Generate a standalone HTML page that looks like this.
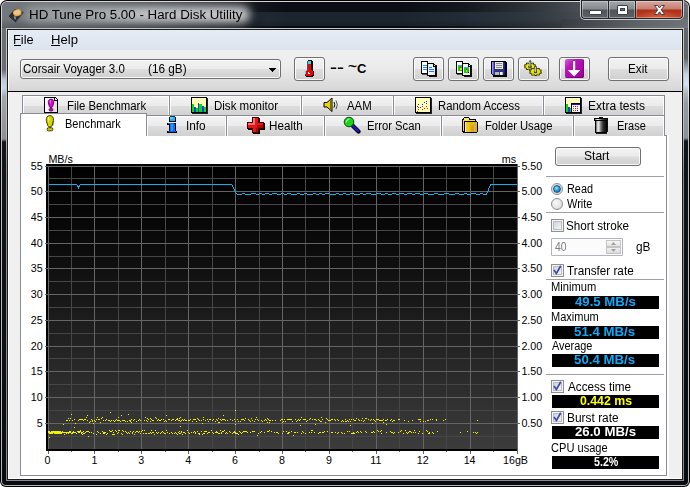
<!DOCTYPE html>
<html><head><meta charset="utf-8"><title>HD Tune Pro 5.00 - Hard Disk Utility</title>
<style>
html,body{margin:0;padding:0}
body{width:690px;height:487px;background:#fff;position:relative;overflow:hidden;font-family:"Liberation Sans",sans-serif;font-size:12px}
div,span,svg{position:absolute;box-sizing:border-box}
.t{white-space:pre;transform-origin:0 50%;color:#000}
.btn{border:1px solid #707070;border-radius:3px;background:linear-gradient(#f2f2f2 0,#ebebeb 48%,#dddddd 52%,#cfcfcf 100%);box-shadow:inset 0 0 0 1px rgba(255,255,255,.85)}
.tab{border:1px solid #898c95;border-bottom:none;background:linear-gradient(#f3f3f3 0,#ebebeb 48%,#dddddd 52%,#d0d0d0 100%);box-shadow:inset 1px 1px 0 0 rgba(255,255,255,.9),inset -1px 0 0 0 rgba(255,255,255,.9)}
.sep{height:1px;background:#a0a0a0;left:546px;width:118px}
.vb{left:552px;width:107px;height:13px;background:#000}
.cb{width:13px;height:13px;border:1px solid #8e8f8f;background:#f4f4f4;box-shadow:inset 0 0 0 1px #f4f4f4,inset 0 0 0 2px #b8bcc4}
.cbi{left:2px;top:2px;width:7px;height:7px;background:linear-gradient(135deg,#d0d4dc,#f6f6f6)}
.ax{font-size:10.7px;line-height:11px;white-space:pre;color:#000}
</style></head><body>
<div id="frame" style="left:0;top:0;width:690px;height:487px;border-radius:7px 7px 6px 6px;background:#000"></div>
<div style="left:1px;top:1px;width:688px;height:485px;border-radius:6px 6px 5px 5px;background:linear-gradient(#d4d4d4 0,#c4c8cc 70px,#e8f0f8 88px,#c8ccd0 110px,#bcbcbc 138px,#b8b8b8 100%)"></div>
<div id="glass" style="left:2px;top:2px;width:686px;height:483px;border-radius:5px 5px 4px 4px;background:linear-gradient(#6c7276 0,#686e73 68px,#bccada 78px,#c8d8e8 86px,#a0a6aa 95px,#8c9094 137px,#12161c 140px,#080c12 100%)"></div>
<div id="tb" style="left:2px;top:2px;width:686px;height:26px;border-radius:5px 5px 0 0;background:
linear-gradient(to right,#72787c 0,#6c7276 50px,#555b61 110px,#3e444a 170px,#262c32 225px,#12161c 258px,#0a0e14 285px,#0a0e14 400px,#12171e 460px,#2c3238 525px,#474d52 575px,#62686c 640px,#6a7074 100%)"></div>
<div style="left:2px;top:12px;width:686px;height:14px;background:linear-gradient(to right,rgba(0,0,0,.0) 0,rgba(0,0,0,.06) 230px,rgba(70,90,110,.30) 265px,rgba(70,90,110,.30) 470px,rgba(40,50,60,.1) 560px,rgba(0,0,0,.05) 100%)"></div>
<div style="left:2px;top:19px;width:560px;height:9px;background:linear-gradient(rgba(0,0,0,0),rgba(0,0,0,.22))"></div>
<div style="left:562px;top:19px;width:126px;height:9px;background:linear-gradient(to right,rgba(0,0,0,.1),rgba(255,255,255,.06))"></div>
<div style="left:24px;top:6px;width:226px;height:17px;border-radius:8px;filter:blur(4px);background:linear-gradient(to right,rgba(255,255,255,.24) 0,rgba(255,255,255,.4) 50px,rgba(255,255,255,.66) 120px,rgba(255,255,255,.74) 200px,rgba(255,255,255,.72) 100%)"></div>
<div style="left:684px;top:28px;width:4px;height:453px;background:linear-gradient(#62686c 0,#5e6468 30px,#c4d4e4 46px,#d4e4f4 56px,#aab2ba 66px,#969a9e 76px,#8c9094 110px,#12161c 113px,#080c12 100%)"></div>
<div style="left:6px;top:28px;width:678px;height:453px;background:linear-gradient(#c6c6c6 0,#c0c0c0 100px,#8c8c8c 145px,#8a8a8a 100%)"></div>
<div style="left:7px;top:29px;width:676px;height:451px;background:#1c1c1c"></div>
<div id="client" style="left:8px;top:30px;width:674px;height:449px;background:#f0f0f0;border-left:1px solid #fff;border-right:1px solid #f8f8f8;border-bottom:1px solid #fff"></div>
<svg style="left:8px;top:8px" width="17" height="15" viewBox="8 8 17 15">
<polygon points="9,15.5 15,9.3 23.5,12 15.8,21.5" fill="#2c2c30"/>
<polygon points="9,15.5 15.8,21.5 15.8,22.4 9,16.6" fill="#161618"/>
<polygon points="15.8,21.5 23.5,12 23.5,13 15.8,22.4" fill="#404046"/>
<ellipse cx="17.3" cy="12.8" rx="4.3" ry="3.3" fill="#eaa84a" transform="rotate(-14 17.3 12.8)"/>
<ellipse cx="17" cy="12.4" rx="3.2" ry="2.3" fill="#f6c676" transform="rotate(-14 17 12.4)"/>
<ellipse cx="17.2" cy="12.7" rx="1.3" ry="1.1" fill="#c4c4cc"/>
<polygon points="13.6,16.4 15.4,16 16.2,19 14.6,19.6" fill="#8c8c94"/>
</svg>
<span class="t" style="left:28.73px;top:9px;font-size:12.5px;line-height:12.5px;transform:scaleX(1.0663);">HD Tune Pro 5.00 - Hard Disk Utility</span>
<div id="cap" style="left:580px;top:0;width:104px;height:20px;border-radius:0 0 5px 5px;background:#c8ccd0"></div>
<div style="left:581px;top:0;width:102px;height:19px;border-radius:0 0 4px 4px;background:#22262a"></div>
<div style="left:582px;top:1px;width:26px;height:17px;border-radius:0 0 0 3px;background:linear-gradient(#a4a8ac 0,#858a8e 8px,#50555a 9px,#5c6166 100%);box-shadow:inset 0 0 0 1px rgba(255,255,255,.35)"></div>
<div style="left:609px;top:1px;width:26px;height:17px;background:linear-gradient(#a4a8ac 0,#858a8e 8px,#50555a 9px,#5c6166 100%);box-shadow:inset 0 0 0 1px rgba(255,255,255,.35)"></div>
<div style="left:636px;top:1px;width:46px;height:17px;border-radius:0 0 3px 0;background:radial-gradient(ellipse 22px 8px at 50% 100%,#d86040 0,rgba(216,96,64,0) 100%),linear-gradient(#d8a89c 0,#c67e6e 8px,#ae2e18 9px,#bc4228 100%);box-shadow:inset 0 0 0 1px rgba(255,255,255,.35)"></div>
<div style="left:589px;top:10px;width:13px;height:5px;background:#fff;border:1px solid #40444e;border-radius:1px"></div>
<div style="left:617px;top:5px;width:11px;height:10px;border:1px solid #3a3e48;border-radius:1px;background:#fff"></div>
<div style="left:620px;top:8px;width:5px;height:3px;background:#70757a;border:1px solid #3a3e48"></div>
<svg style="left:653px;top:4px" width="13" height="12" viewBox="0 0 13 12"><path d="M1.5,1.5 L4.6,1.5 L6.5,3.9 L8.4,1.5 L11.5,1.5 L8.2,5.8 L11.7,10.5 L8.5,10.5 L6.5,7.8 L4.5,10.5 L1.3,10.5 L4.8,5.8 Z" fill="#fff" stroke="#40404c" stroke-width="1" stroke-linejoin="round"/></svg>
<div id="menu" style="left:9px;top:30px;width:672px;height:20px;background:linear-gradient(#e6ecf5,#dde4ee)"></div>
<span class="t" style="left:13.48px;top:34px;font-size:12px;line-height:12px;transform:scaleX(1.0645);">File</span>
<div style="left:14px;top:45px;width:7px;height:1px;background:#000"></div><span class="t" style="left:50.55px;top:34px;font-size:12px;line-height:12px;transform:scaleX(1.0908);">Help</span>
<div style="left:51px;top:45px;width:9px;height:1px;background:#000"></div><div id="toolbar" style="left:9px;top:50px;width:672px;height:41px;background:linear-gradient(#f0f0f0 0,#ececec 40%,#d6d6d6 100%)"></div>
<div style="left:8px;top:91px;width:674px;height:1px;background:#000"></div>
<div class="btn" style="left:20px;top:59px;width:261px;height:20px"></div>
<svg style="left:269px;top:68px" width="7" height="4" viewBox="0 0 7 4" shape-rendering="crispEdges"><polygon points="0,0 7,0 3.5,4" fill="#000"/></svg>
<span class="t" style="left:23.22px;top:63px;font-size:12.5px;line-height:12.5px;transform:scaleX(0.9223);">Corsair Voyager 3.0</span>
<span class="t" style="left:148.29px;top:63px;font-size:12.5px;line-height:12.5px;transform:scaleX(0.9424);">(16 gB)</span>
<div class="btn" style="left:294px;top:57px;width:31px;height:24px"></div>
<div class="btn" style="left:413px;top:57px;width:31px;height:24px"></div>
<div class="btn" style="left:448px;top:57px;width:31px;height:24px"></div>
<div class="btn" style="left:483px;top:57px;width:31px;height:24px"></div>
<div class="btn" style="left:518px;top:57px;width:31px;height:24px"></div>
<div class="btn" style="left:559px;top:57px;width:31px;height:24px"></div>
<div class="btn" style="left:608px;top:57px;width:61px;height:24px"></div>
<span class="t" style="left:627.76px;top:63px;font-size:12.5px;line-height:12.5px;transform:scaleX(0.9414);">Exit</span>
<svg style="left:303px;top:60px" width="12" height="18" viewBox="0 0 12 18" shape-rendering="crispEdges">
<rect x="5" y="0" width="4" height="1" fill="#000"/><rect x="4" y="1" width="1" height="10" fill="#456"/><rect x="5" y="1" width="5" height="12" fill="#000"/>
<rect x="5" y="1" width="3" height="3" fill="#28dce8"/>
<rect x="5" y="4" width="3" height="9" fill="#f00000"/>
<rect x="2" y="11" width="9" height="5" fill="#000"/><rect x="3" y="10" width="7" height="7" fill="#000"/>
<rect x="2" y="11" width="8" height="4" fill="#f00000"/><rect x="3" y="10" width="6" height="6" fill="#f00000"/>
<rect x="2" y="11" width="1" height="3" fill="#40d8e8"/><rect x="3" y="10" width="1" height="1" fill="#40d8e8"/>
<rect x="5" y="12" width="1" height="2" fill="#fff"/><rect x="6" y="13" width="1" height="1" fill="#fff"/>
</svg>
<span class="t" style="left:329.8px;top:61px;font-size:13px;line-height:13px;font-weight:bold;transform:scaleX(1.62)">--</span><span class="t" style="left:348.3px;top:60px;font-size:13px;line-height:13px;font-weight:bold;transform:scaleX(1.2)">~</span><span class="t" style="left:357px;top:62px;font-size:13px;line-height:13px;font-weight:bold">C</span>
<svg style="left:421px;top:61px" width="17" height="17" viewBox="0 0 17 17" shape-rendering="crispEdges"><rect x="0" y="0" width="7" height="13" fill="#000"/><rect x="1" y="1" width="5" height="11" fill="#fff"/><rect x="1" y="13" width="6" height="1" fill="#555"/><rect x="8" y="4" width="8" height="12" fill="#111"/><rect x="6" y="2" width="7" height="13" fill="#000"/><rect x="6" y="5" width="9" height="10" fill="#000"/><rect x="7" y="3" width="5" height="11" fill="#f4f4f4"/><rect x="12" y="6" width="2" height="8" fill="#e8e8e8"/><rect x="12" y="3" width="1" height="3" fill="#000"/><rect x="12" y="5" width="3" height="1" fill="#000"/><rect x="13" y="3" width="1" height="1" fill="#000"/><rect x="14" y="4" width="1" height="1" fill="#000"/><rect x="13" y="4" width="1" height="1" fill="#fff"/><rect x="2" y="4" width="4" height="1" fill="#1e90ff"/><rect x="2" y="6" width="4" height="1" fill="#1e90ff"/><rect x="2" y="8" width="4" height="1" fill="#1e90ff"/><rect x="8" y="6" width="3" height="1" fill="#1e78ff"/><rect x="8" y="8" width="5" height="1" fill="#1e78ff"/><rect x="8" y="10" width="5" height="1" fill="#1e78ff"/></svg>
<svg style="left:456px;top:61px" width="17" height="17" viewBox="0 0 17 17" shape-rendering="crispEdges"><rect x="0" y="0" width="7" height="13" fill="#000"/><rect x="1" y="1" width="5" height="11" fill="#fff"/><rect x="1" y="13" width="6" height="1" fill="#555"/><rect x="8" y="4" width="8" height="12" fill="#111"/><rect x="6" y="2" width="7" height="13" fill="#000"/><rect x="6" y="5" width="9" height="10" fill="#000"/><rect x="7" y="3" width="5" height="11" fill="#f4f4f4"/><rect x="12" y="6" width="2" height="8" fill="#e8e8e8"/><rect x="12" y="3" width="1" height="3" fill="#000"/><rect x="12" y="5" width="3" height="1" fill="#000"/><rect x="13" y="3" width="1" height="1" fill="#000"/><rect x="14" y="4" width="1" height="1" fill="#000"/><rect x="13" y="4" width="1" height="1" fill="#fff"/><rect x="2" y="4" width="4" height="6" fill="#18c818"/><rect x="2" y="4" width="4" height="1" fill="#28b8f0"/><rect x="4" y="6" width="1" height="1" fill="#f01010"/><rect x="4" y="7" width="2" height="2" fill="#e0e000"/><rect x="8" y="6" width="5" height="6" fill="#18c818"/><rect x="8" y="6" width="5" height="1" fill="#28b8f0"/><rect x="10" y="8" width="1" height="1" fill="#f01010"/><rect x="10" y="9" width="1" height="2" fill="#e0e000"/><rect x="12" y="11" width="1" height="1" fill="#000"/></svg>
<svg style="left:491px;top:61px" width="16" height="16" viewBox="0 0 16 16" shape-rendering="crispEdges">
<rect x="15" y="1" width="1" height="15" fill="#000"/><rect x="2" y="15" width="14" height="1" fill="#000"/>
<rect x="0" y="0" width="15" height="13" fill="#000"/><rect x="1" y="13" width="14" height="1" fill="#000"/><rect x="2" y="14" width="13" height="1" fill="#000"/>
<rect x="1" y="1" width="13" height="12" fill="#2424ff"/><rect x="2" y="13" width="12" height="1" fill="#2424ff"/><rect x="1" y="1" width="1" height="12" fill="#9090ff"/><rect x="2" y="1" width="1" height="12" fill="#5858ff"/><rect x="13" y="1" width="1" height="13" fill="#1010c8"/>
<rect x="3" y="1" width="10" height="8" fill="#383838"/><rect x="4" y="1" width="8" height="7" fill="#e8e8e8"/>
<rect x="5" y="2" width="6" height="1" fill="#8c8c8c"/><rect x="5" y="4" width="6" height="1" fill="#8c8c8c"/><rect x="5" y="6" width="6" height="1" fill="#8c8c8c"/>
<rect x="3" y="10" width="10" height="4" fill="#383838"/><rect x="4" y="11" width="8" height="3" fill="#b8b8b8"/><rect x="8" y="11" width="1" height="3" fill="#505050"/><rect x="9" y="11" width="2" height="3" fill="#f4f4f4"/>
</svg>
<svg style="left:520px;top:57px" width="26" height="22" viewBox="520 57 26 22"><rect x="533.5" y="66.2" width="2.2" height="2" fill="#181800"/><rect x="531.8" y="67.9" width="2.2" height="2" fill="#181800"/><rect x="529.0" y="68.5" width="2.2" height="2" fill="#181800"/><rect x="526.1" y="67.9" width="2.2" height="2" fill="#181800"/><rect x="524.4" y="66.3" width="2.2" height="2" fill="#181800"/><rect x="524.3" y="64.4" width="2.2" height="2" fill="#181800"/><rect x="526.0" y="62.7" width="2.2" height="2" fill="#181800"/><rect x="528.8" y="62.1" width="2.2" height="2" fill="#181800"/><rect x="531.7" y="62.7" width="2.2" height="2" fill="#181800"/><rect x="533.4" y="64.3" width="2.2" height="2" fill="#181800"/><ellipse cx="530" cy="66.3" rx="4.5" ry="2.9000000000000004" fill="#e8e800" stroke="#383800" stroke-width=".8"/><rect x="533.4" y="66.6" width="1.2" height="1" fill="#f0f000"/><rect x="531.9" y="68.0" width="1.2" height="1" fill="#f0f000"/><rect x="529.5" y="68.5" width="1.2" height="1" fill="#f0f000"/><rect x="527.0" y="68.0" width="1.2" height="1" fill="#f0f000"/><rect x="525.4" y="66.7" width="1.2" height="1" fill="#f0f000"/><rect x="525.4" y="65.0" width="1.2" height="1" fill="#f0f000"/><rect x="526.9" y="63.6" width="1.2" height="1" fill="#f0f000"/><rect x="529.3" y="63.1" width="1.2" height="1" fill="#f0f000"/><rect x="531.8" y="63.6" width="1.2" height="1" fill="#f0f000"/><rect x="533.4" y="64.9" width="1.2" height="1" fill="#f0f000"/><ellipse cx="530" cy="66.7" rx="1.9" ry="1.2" fill="#404000"/><rect x="528.9" y="61.0" width="2.4" height="6" fill="#484850"/><rect x="529.3" y="61.699999999999996" width="1" height="5" fill="#e0e0e8"/><polygon points="528.9,61.0 530.1,59.9 531.3,61.0" fill="#484850"/><rect x="539.4" y="71.7" width="2.2" height="2" fill="#181800"/><rect x="537.5" y="73.4" width="2.2" height="2" fill="#181800"/><rect x="534.5" y="74.1" width="2.2" height="2" fill="#181800"/><rect x="531.4" y="73.5" width="2.2" height="2" fill="#181800"/><rect x="529.5" y="71.8" width="2.2" height="2" fill="#181800"/><rect x="529.4" y="69.7" width="2.2" height="2" fill="#181800"/><rect x="531.3" y="68.0" width="2.2" height="2" fill="#181800"/><rect x="534.3" y="67.3" width="2.2" height="2" fill="#181800"/><rect x="537.4" y="67.9" width="2.2" height="2" fill="#181800"/><rect x="539.3" y="69.6" width="2.2" height="2" fill="#181800"/><ellipse cx="535.5" cy="71.7" rx="4.9" ry="3.1" fill="#e8e800" stroke="#383800" stroke-width=".8"/><rect x="539.3" y="72.1" width="1.2" height="1" fill="#f0f000"/><rect x="537.7" y="73.5" width="1.2" height="1" fill="#f0f000"/><rect x="535.0" y="74.1" width="1.2" height="1" fill="#f0f000"/><rect x="532.2" y="73.6" width="1.2" height="1" fill="#f0f000"/><rect x="530.5" y="72.1" width="1.2" height="1" fill="#f0f000"/><rect x="530.5" y="70.3" width="1.2" height="1" fill="#f0f000"/><rect x="532.1" y="68.9" width="1.2" height="1" fill="#f0f000"/><rect x="534.8" y="68.3" width="1.2" height="1" fill="#f0f000"/><rect x="537.6" y="68.8" width="1.2" height="1" fill="#f0f000"/><rect x="539.3" y="70.3" width="1.2" height="1" fill="#f0f000"/><ellipse cx="535.5" cy="72.10000000000001" rx="1.9" ry="1.2" fill="#404000"/><rect x="534.4" y="66.4" width="2.4" height="6" fill="#484850"/><rect x="534.8" y="67.10000000000001" width="1" height="5" fill="#e0e0e8"/><polygon points="534.4,66.4 535.6,65.3 536.8,66.4" fill="#484850"/></svg>
<div style="left:565px;top:59px;width:19px;height:19px;border-radius:2px;background:linear-gradient(135deg,#d860d8 0,#b818b8 30%,#a808a8 70%,#900090 100%);box-shadow:inset -1px -1px 0 rgba(90,0,90,.5)"></div>
<svg style="left:565px;top:59px" width="19" height="19" viewBox="565 59 19 19"><path d="M573,61 h2.2 v9 h5.2 l-6.3,6.6 l-6.3,-6.6 h5.2 z" fill="#fff"/></svg>
<div style="left:20px;top:135px;width:649px;height:344px;background:#fff"></div>
<div id="panel" style="left:20px;top:135px;width:647px;height:341px;background:#fff;border:1px solid #898c95"></div>
<div class="tab" style="left:22px;top:95px;width:148px;height:21px"></div>
<div class="tab" style="left:169px;top:95px;width:133px;height:21px"></div>
<div class="tab" style="left:301px;top:95px;width:93px;height:21px"></div>
<div class="tab" style="left:393px;top:95px;width:151px;height:21px"></div>
<div class="tab" style="left:543px;top:95px;width:122px;height:21px"></div>
<div style="left:22px;top:115px;width:643px;height:1px;background:#898c95"></div>
<div class="tab" style="left:146px;top:115px;width:81px;height:21px"></div>
<div class="tab" style="left:226px;top:115px;width:99px;height:21px"></div>
<div class="tab" style="left:324px;top:115px;width:118px;height:21px"></div>
<div class="tab" style="left:441px;top:115px;width:133px;height:21px"></div>
<div class="tab" style="left:573px;top:115px;width:92px;height:21px"></div>
<div style="left:20px;top:113px;width:127px;height:23px;background:#fff;border:1px solid #898c95;border-bottom:none"></div>
<span class="t" style="left:66.59px;top:100px;font-size:12.5px;line-height:12.5px;transform:scaleX(0.9109);">File Benchmark</span>
<span class="t" style="left:213.88px;top:100px;font-size:12.5px;line-height:12.5px;transform:scaleX(0.9210);">Disk monitor</span>
<span class="t" style="left:346.70px;top:100px;font-size:12.5px;line-height:12.5px;transform:scaleX(0.9131);">AAM</span>
<span class="t" style="left:437.79px;top:100px;font-size:12.5px;line-height:12.5px;transform:scaleX(0.9070);">Random Access</span>
<span class="t" style="left:587.74px;top:100px;font-size:12.5px;line-height:12.5px;transform:scaleX(0.9641);">Extra tests</span>
<span class="t" style="left:64.92px;top:118px;font-size:12.5px;line-height:12.5px;transform:scaleX(0.8822);">Benchmark</span>
<span class="t" style="left:185.94px;top:120px;font-size:12.5px;line-height:12.5px;transform:scaleX(0.9443);">Info</span>
<span class="t" style="left:269.27px;top:120px;font-size:12.5px;line-height:12.5px;transform:scaleX(0.9323);">Health</span>
<span class="t" style="left:366.80px;top:120px;font-size:12.5px;line-height:12.5px;transform:scaleX(0.8994);">Error Scan</span>
<span class="t" style="left:484.90px;top:120px;font-size:12.5px;line-height:12.5px;transform:scaleX(0.8996);">Folder Usage</span>
<span class="t" style="left:616.82px;top:120px;font-size:12.5px;line-height:12.5px;transform:scaleX(0.8814);">Erase</span>
<svg style="left:44px;top:97px" width="15" height="16" viewBox="0 0 15 16" shape-rendering="crispEdges">
<rect x="0" y="0" width="14" height="16" fill="#000"/><rect x="1" y="1" width="12" height="14" fill="#e4e4e4"/><rect x="1" y="1" width="6" height="14" fill="#f6f6f6"/>
<rect x="11" y="0" width="3" height="3" fill="#ebebeb"/><rect x="10" y="1" width="1" height="3" fill="#000"/><rect x="10" y="3" width="4" height="1" fill="#000"/><rect x="11" y="1" width="1" height="2" fill="#fff"/><rect x="12" y="2" width="1" height="1" fill="#fff"/><rect x="11" y="0" width="1" height="1" fill="#000"/><rect x="12" y="1" width="1" height="1" fill="#000"/><rect x="13" y="2" width="1" height="1" fill="#000"/>
<g shape-rendering="auto"><path d="M7,2.2 C9,2.2 9.9,3.8 9.6,5.8 L8.6,9.6 C8.4,10.4 7.8,10.6 7,10.6 C6.2,10.6 5.6,10.4 5.4,9.6 L4.4,5.8 C4.1,3.8 5,2.2 7,2.2 Z" fill="#e400e4" stroke="#4a004a" stroke-width=".9"/>
<path d="M5.8,4.2 C5.9,3.4 6.4,3.1 6.8,3.1 L6.5,7.5 Z" fill="#ff90ff"/>
<ellipse cx="7" cy="12.8" rx="2" ry="1.3" fill="#e400e4" stroke="#4a004a" stroke-width=".9"/></g>
</svg>
<svg style="left:45px;top:115px" width="10" height="17" viewBox="0 0 10 17">
<path d="M4.8,0.6 C7.6,0.6 8.7,2.8 8.4,5.4 L7.1,10.6 C6.9,11.5 6.1,11.8 4.9,11.8 C3.7,11.8 2.9,11.5 2.7,10.6 L1.3,5.4 C1,2.8 2.2,0.6 4.8,0.6 Z" fill="#d6d600" stroke="#3c3c00" stroke-width="1"/>
<path d="M2.9,3.4 C3,2.2 3.8,1.7 4.4,1.7 L4,8.4 Z" fill="#f6f680"/>
<path d="M8.7,5.8 L7.5,10.8 L8.1,11.3 L9.3,6.2 Z" fill="#202000" opacity=".55"/>
<rect x="2.2" y="12.7" width="5.6" height="3.1" rx="1.3" fill="#cccc00" stroke="#3c3c00" stroke-width="1"/>
</svg>
<svg style="left:167px;top:116px" width="11" height="18" viewBox="0 0 11 18" shape-rendering="crispEdges">
<rect x="2" y="1" width="7" height="5" fill="#000"/><rect x="3" y="0" width="5" height="1" fill="#103040"/><rect x="3" y="1" width="5" height="4" fill="#18b4f4"/><rect x="3" y="1" width="3" height="2" fill="#50d0ff"/>
<rect x="0" y="7" width="8" height="2" fill="#000"/><rect x="2" y="7" width="7" height="10" fill="#000"/><rect x="0" y="15" width="10" height="2" fill="#000"/>
<rect x="1" y="7" width="6" height="1" fill="#0868f0"/><rect x="3" y="8" width="5" height="7" fill="#0a70ff"/><rect x="4" y="8" width="2" height="7" fill="#2c98ff"/><rect x="1" y="15" width="8" height="1" fill="#0858e8"/>
</svg>
<svg style="left:247px;top:117px" width="18" height="17" viewBox="0 0 18 17" shape-rendering="crispEdges">
<rect x="6" y="1" width="7" height="16" fill="#000"/><rect x="1" y="6" width="17" height="7" fill="#000"/>
<rect x="5" y="0" width="7" height="16" fill="#400"/><rect x="0" y="5" width="17" height="7" fill="#400"/>
<rect x="6" y="1" width="5" height="14" fill="#e01818"/><rect x="1" y="6" width="15" height="5" fill="#e01818"/>
<rect x="6" y="1" width="2" height="5" fill="#ff7070"/><rect x="1" y="6" width="7" height="2" fill="#ff7070"/>
<rect x="10" y="8" width="6" height="3" fill="#b00808"/><rect x="9" y="11" width="2" height="4" fill="#b00808"/>
</svg>
<svg style="left:191px;top:97px" width="17" height="17" viewBox="0 0 17 17" shape-rendering="crispEdges">
<rect x="1" y="1" width="16" height="16" fill="#222"/><rect x="0" y="0" width="16" height="16" fill="#000"/>
<rect x="1" y="1" width="14" height="14" fill="#ffffb8"/>
<rect x="1" y="7" width="2" height="8" fill="#00e000"/><rect x="3" y="10" width="2" height="5" fill="#3030ff"/><rect x="5" y="11" width="2" height="4" fill="#00e000"/>
<rect x="7" y="6" width="1" height="9" fill="#3030ff"/><rect x="8" y="7" width="3" height="8" fill="#00e000"/><rect x="11" y="9" width="2" height="6" fill="#3030ff"/><rect x="13" y="10" width="2" height="5" fill="#00e000"/>
</svg>
<svg style="left:323px;top:97px" width="17" height="16" viewBox="0 0 17 16">
<path d="M1,5.5 L4,5.5 L9,1 L9,14.5 L4,10 L1,10 Z" fill="#e8d800" stroke="#000" stroke-width="1" stroke-linejoin="round"/>
<path d="M7,3.5 L8,2.6 L8,13 L7,12 Z" fill="#806800"/>
<path d="M11,5 Q12.6,7.8 11,10.6" fill="none" stroke="#000" stroke-width="1"/>
<path d="M13,3.4 Q15.6,7.8 13,12.2" fill="none" stroke="#555" stroke-width="1"/>
</svg>
<svg style="left:415px;top:97px" width="17" height="17" viewBox="0 0 17 17" shape-rendering="crispEdges">
<rect x="1" y="1" width="16" height="16" fill="#222"/><rect x="0" y="0" width="16" height="16" fill="#000"/><rect x="1" y="1" width="14" height="14" fill="#ffffb8"/><rect x="11" y="4" width="1" height="1" fill="#1818ff"/><rect x="9" y="5" width="1" height="1" fill="#1818ff"/><rect x="11" y="6" width="1" height="1" fill="#1818ff"/><rect x="3" y="7" width="1" height="1" fill="#1818ff"/><rect x="7" y="7" width="1" height="1" fill="#1818ff"/><rect x="2" y="9" width="1" height="1" fill="#1818ff"/><rect x="5" y="10" width="1" height="1" fill="#1818ff"/><rect x="7" y="9" width="1" height="1" fill="#ff1010"/><rect x="11" y="9" width="1" height="1" fill="#ff1010"/><rect x="3" y="10" width="1" height="1" fill="#ff1010"/><rect x="9" y="11" width="1" height="1" fill="#ff1010"/><rect x="12" y="11" width="1" height="1" fill="#ff1010"/><rect x="3" y="12" width="1" height="1" fill="#ff1010"/><rect x="7" y="12" width="1" height="1" fill="#ff1010"/><rect x="2" y="14" width="1" height="1" fill="#ff1010"/></svg>
<svg style="left:565px;top:97px" width="17" height="17" viewBox="0 0 17 17" shape-rendering="crispEdges">
<rect x="1" y="1" width="16" height="16" fill="#222"/><rect x="0" y="0" width="16" height="16" fill="#000"/><rect x="1" y="1" width="14" height="14" fill="#ffffb8"/>
<rect x="1" y="7" width="2" height="8" fill="#00e000"/><rect x="3" y="10" width="2" height="5" fill="#3030ff"/><rect x="5" y="11" width="1" height="4" fill="#00e000"/>
<rect x="6" y="6" width="10" height="10" fill="#000"/><rect x="7" y="7" width="8" height="8" fill="#f4f4f4"/><rect x="7" y="7" width="8" height="1" fill="#1010f0"/><rect x="8" y="9" width="1" height="1" fill="#ff1010"/><rect x="10" y="9" width="1" height="1" fill="#1818ff"/><rect x="12" y="9" width="1" height="1" fill="#ff1010"/><rect x="8" y="11" width="1" height="1" fill="#10b010"/><rect x="10" y="11" width="1" height="1" fill="#ff1010"/><rect x="12" y="11" width="1" height="1" fill="#ff1010"/><rect x="8" y="13" width="1" height="1" fill="#ff1010"/><rect x="10" y="13" width="1" height="1" fill="#ff1010"/><rect x="12" y="13" width="1" height="1" fill="#1818ff"/>
</svg>
<svg style="left:343px;top:116px" width="18" height="18" viewBox="0 0 18 18">
<path d="M8,8 L15.5,15.5" stroke="#000" stroke-width="4.2" stroke-linecap="round"/>
<path d="M8.5,8.5 L15.2,15.2" stroke="#1818c8" stroke-width="2.4" stroke-linecap="round"/>
<circle cx="6" cy="6" r="4.8" fill="#20d020" stroke="#085008" stroke-width="1"/>
<path d="M3.4,6.4 A3,3 0 0 1 6.6,3.2" stroke="#a0ffa0" stroke-width="1.2" fill="none"/>
</svg>
<svg style="left:462px;top:117px" width="16" height="16" viewBox="0 0 16 16" shape-rendering="crispEdges">
<rect x="2" y="0" width="5" height="1" fill="#000"/><rect x="1" y="1" width="7" height="2" fill="#000"/><rect x="0" y="2" width="14" height="13" fill="#000"/><rect x="1" y="15" width="2" height="1" fill="#000"/>
<rect x="2" y="1" width="5" height="3" fill="#f8ec70"/><rect x="1" y="3" width="12" height="2" fill="#f4e050"/><rect x="1" y="4" width="2" height="10" fill="#f0d838"/><rect x="7" y="2" width="1" height="1" fill="#000"/>
<rect x="2" y="4" width="13" height="12" fill="#000"/><rect x="3" y="15" width="12" height="1" fill="#000"/><rect x="15" y="5" width="1" height="10" fill="#000"/>
<rect x="3" y="5" width="11" height="10" fill="#e8b818"/><rect x="3" y="5" width="1" height="10" fill="#fff080"/><rect x="4" y="5" width="3" height="10" fill="#f0c828"/><rect x="9" y="8" width="3" height="7" fill="#dca410"/><rect x="12" y="5" width="1" height="10" fill="#c0b090"/><rect x="13" y="5" width="2" height="10" fill="#e0b020"/>
</svg>
<svg style="left:594px;top:117px" width="15" height="17" viewBox="0 0 15 17" shape-rendering="crispEdges">
<defs><linearGradient id="tg" x1="0" x2="1" y1="0" y2="0"><stop offset="0" stop-color="#666"/><stop offset=".2" stop-color="#f0f0f0"/><stop offset=".32" stop-color="#d0d0d0"/><stop offset=".5" stop-color="#707070"/><stop offset=".75" stop-color="#282828"/><stop offset="1" stop-color="#101010"/></linearGradient></defs>
<rect x="5" y="0" width="4" height="1" fill="#000"/><rect x="0" y="1" width="14" height="3" fill="#000"/><rect x="1" y="2" width="12" height="1" fill="url(#tg)"/>
<rect x="1" y="4" width="12" height="12" fill="#000"/><rect x="2" y="16" width="11" height="1" fill="#222"/><rect x="13" y="3" width="1" height="12" fill="#111"/>
<rect x="2" y="4" width="10" height="11" fill="url(#tg)"/>
</svg>
<div style="left:46px;top:164px;width:472px;height:287px;background:#000"></div>
<div style="left:48px;top:166px;width:469px;height:283px;background:linear-gradient(#000 0,#0c0c0c 30%,#242424 65%,#3c3c3c 100%)"></div>
<svg style="left:0;top:0" width="690" height="487" viewBox="0 0 690 487"><g shape-rendering="crispEdges"><rect x="48" y="178" width="469" height="1" fill="#464646"/><rect x="48" y="204" width="469" height="1" fill="#464646"/><rect x="48" y="230" width="469" height="1" fill="#464646"/><rect x="48" y="256" width="469" height="1" fill="#464646"/><rect x="48" y="281" width="469" height="1" fill="#464646"/><rect x="48" y="307" width="469" height="1" fill="#464646"/><rect x="48" y="333" width="469" height="1" fill="#464646"/><rect x="48" y="358" width="469" height="1" fill="#464646"/><rect x="48" y="384" width="469" height="1" fill="#464646"/><rect x="48" y="410" width="469" height="1" fill="#464646"/><rect x="48" y="436" width="469" height="1" fill="#464646"/><rect x="71" y="166" width="1" height="283" fill="#464646"/><rect x="71" y="451" width="1" height="1" fill="#666"/><rect x="118" y="166" width="1" height="283" fill="#464646"/><rect x="118" y="451" width="1" height="1" fill="#666"/><rect x="165" y="166" width="1" height="283" fill="#464646"/><rect x="165" y="451" width="1" height="1" fill="#666"/><rect x="212" y="166" width="1" height="283" fill="#464646"/><rect x="212" y="451" width="1" height="1" fill="#666"/><rect x="259" y="166" width="1" height="283" fill="#464646"/><rect x="259" y="451" width="1" height="1" fill="#666"/><rect x="305" y="166" width="1" height="283" fill="#464646"/><rect x="305" y="451" width="1" height="1" fill="#666"/><rect x="352" y="166" width="1" height="283" fill="#464646"/><rect x="352" y="451" width="1" height="1" fill="#666"/><rect x="399" y="166" width="1" height="283" fill="#464646"/><rect x="399" y="451" width="1" height="1" fill="#666"/><rect x="446" y="166" width="1" height="283" fill="#464646"/><rect x="446" y="451" width="1" height="1" fill="#666"/><rect x="493" y="166" width="1" height="283" fill="#464646"/><rect x="493" y="451" width="1" height="1" fill="#666"/><rect x="45" y="166" width="475" height="1" fill="#656565"/><rect x="45" y="191" width="475" height="1" fill="#656565"/><rect x="45" y="217" width="475" height="1" fill="#656565"/><rect x="45" y="243" width="475" height="1" fill="#656565"/><rect x="45" y="268" width="475" height="1" fill="#656565"/><rect x="45" y="294" width="475" height="1" fill="#656565"/><rect x="45" y="320" width="475" height="1" fill="#656565"/><rect x="45" y="346" width="475" height="1" fill="#656565"/><rect x="45" y="371" width="475" height="1" fill="#656565"/><rect x="45" y="397" width="475" height="1" fill="#656565"/><rect x="45" y="423" width="475" height="1" fill="#656565"/><rect x="48" y="166" width="1" height="283" fill="#656565"/><rect x="48" y="451" width="1" height="3" fill="#666"/><rect x="94" y="166" width="1" height="283" fill="#656565"/><rect x="94" y="451" width="1" height="3" fill="#666"/><rect x="141" y="166" width="1" height="283" fill="#656565"/><rect x="141" y="451" width="1" height="3" fill="#666"/><rect x="188" y="166" width="1" height="283" fill="#656565"/><rect x="188" y="451" width="1" height="3" fill="#666"/><rect x="235" y="166" width="1" height="283" fill="#656565"/><rect x="235" y="451" width="1" height="3" fill="#666"/><rect x="282" y="166" width="1" height="283" fill="#656565"/><rect x="282" y="451" width="1" height="3" fill="#666"/><rect x="329" y="166" width="1" height="283" fill="#656565"/><rect x="329" y="451" width="1" height="3" fill="#666"/><rect x="376" y="166" width="1" height="283" fill="#656565"/><rect x="376" y="451" width="1" height="3" fill="#666"/><rect x="423" y="166" width="1" height="283" fill="#656565"/><rect x="423" y="451" width="1" height="3" fill="#666"/><rect x="470" y="166" width="1" height="283" fill="#656565"/><rect x="470" y="451" width="1" height="3" fill="#666"/><rect x="517" y="166" width="1" height="283" fill="#656565"/><rect x="517" y="451" width="1" height="3" fill="#666"/><rect x="517" y="164" width="1" height="290" fill="#666"/></g><polyline shape-rendering="crispEdges" fill="none" stroke="#12b0ee" stroke-width="1" points="48.5,184.5 76.5,184.5 77.5,185.5 78.5,187.5 79.5,185.5 80.5,184.5 231.5,184.5 233.5,187.5 235.5,192.5 237.5,194.5 241.5,194.5 242.5,193.5 244.5,193.5 245.5,194.5 250.5,194.5 251.5,193.5 255.5,193.5 256.5,194.5 258.5,194.5 259.5,193.5 261.5,193.5 262.5,194.5 264.5,194.5 265.5,193.5 268.5,193.5 269.5,194.5 271.5,194.5 272.5,193.5 276.5,193.5 277.5,194.5 280.5,194.5 281.5,193.5 283.5,193.5 284.5,194.5 286.5,194.5 287.5,193.5 290.5,193.5 291.5,194.5 296.5,194.5 297.5,193.5 299.5,193.5 300.5,194.5 303.5,194.5 304.5,193.5 306.5,193.5 307.5,194.5 312.5,194.5 313.5,193.5 315.5,193.5 316.5,194.5 318.5,194.5 319.5,193.5 321.5,193.5 322.5,194.5 324.5,194.5 325.5,193.5 329.5,193.5 330.5,194.5 335.5,194.5 336.5,193.5 338.5,193.5 339.5,194.5 342.5,194.5 343.5,193.5 345.5,193.5 346.5,194.5 349.5,194.5 350.5,193.5 353.5,193.5 354.5,194.5 359.5,194.5 360.5,193.5 362.5,193.5 363.5,194.5 365.5,194.5 366.5,193.5 370.5,193.5 371.5,194.5 375.5,194.5 376.5,193.5 380.5,193.5 381.5,194.5 384.5,194.5 385.5,193.5 387.5,193.5 388.5,194.5 391.5,194.5 392.5,193.5 395.5,193.5 396.5,194.5 398.5,194.5 399.5,193.5 403.5,193.5 404.5,194.5 406.5,194.5 407.5,193.5 411.5,193.5 412.5,194.5 414.5,194.5 415.5,193.5 419.5,193.5 420.5,194.5 423.5,194.5 424.5,193.5 427.5,193.5 428.5,194.5 433.5,194.5 434.5,193.5 437.5,193.5 438.5,194.5 443.5,194.5 444.5,193.5 448.5,193.5 449.5,194.5 454.5,194.5 455.5,193.5 458.5,193.5 459.5,194.5 463.5,194.5 464.5,193.5 466.5,193.5 467.5,194.5 470.5,194.5 471.5,193.5 475.5,193.5 476.5,194.5 479.5,194.5 480.5,193.5 482.5,193.5 483.5,194.5 486.5,194.5 488.5,189.5 490.5,184.5 516.5,184.5"/><g fill="#f2f200" shape-rendering="crispEdges"><rect x="48" y="431" width="1" height="1"/><rect x="48" y="432" width="1" height="1"/><rect x="49" y="433" width="1" height="1"/><rect x="49" y="432" width="1" height="1"/><rect x="49" y="431" width="1" height="1"/><rect x="50" y="432" width="1" height="1"/><rect x="50" y="433" width="1" height="1"/><rect x="51" y="431" width="1" height="1"/><rect x="51" y="433" width="1" height="1"/><rect x="51" y="432" width="1" height="1"/><rect x="52" y="431" width="1" height="1"/><rect x="52" y="433" width="1" height="1"/><rect x="52" y="432" width="1" height="1"/><rect x="53" y="432" width="1" height="1"/><rect x="53" y="431" width="1" height="1"/><rect x="54" y="431" width="1" height="1"/><rect x="54" y="432" width="1" height="1"/><rect x="54" y="433" width="1" height="1"/><rect x="55" y="432" width="1" height="1"/><rect x="55" y="433" width="1" height="1"/><rect x="55" y="431" width="1" height="1"/><rect x="56" y="433" width="1" height="1"/><rect x="56" y="432" width="1" height="1"/><rect x="56" y="431" width="1" height="1"/><rect x="57" y="432" width="1" height="1"/><rect x="57" y="431" width="1" height="1"/><rect x="57" y="433" width="1" height="1"/><rect x="58" y="431" width="1" height="1"/><rect x="58" y="432" width="1" height="1"/><rect x="58" y="433" width="1" height="1"/><rect x="59" y="433" width="1" height="1"/><rect x="59" y="432" width="1" height="1"/><rect x="59" y="431" width="1" height="1"/><rect x="60" y="433" width="1" height="1"/><rect x="60" y="431" width="1" height="1"/><rect x="60" y="432" width="1" height="1"/><rect x="61" y="433" width="1" height="1"/><rect x="61" y="432" width="1" height="1"/><rect x="62" y="431" width="1" height="1"/><rect x="62" y="432" width="1" height="1"/><rect x="63" y="432" width="1" height="1"/><rect x="64" y="434" width="1" height="1"/><rect x="64" y="432" width="1" height="1"/><rect x="65" y="432" width="1" height="1"/><rect x="66" y="432" width="1" height="1"/><rect x="66" y="433" width="1" height="1"/><rect x="66" y="420" width="1" height="1"/><rect x="67" y="432" width="1" height="1"/><rect x="67" y="420" width="1" height="1"/><rect x="68" y="433" width="1" height="1"/><rect x="68" y="432" width="1" height="1"/><rect x="68" y="418" width="1" height="1"/><rect x="69" y="432" width="1" height="1"/><rect x="69" y="431" width="1" height="1"/><rect x="69" y="420" width="1" height="1"/><rect x="70" y="431" width="1" height="1"/><rect x="70" y="432" width="1" height="1"/><rect x="70" y="418" width="1" height="1"/><rect x="71" y="433" width="1" height="1"/><rect x="71" y="414" width="1" height="1"/><rect x="72" y="432" width="1" height="1"/><rect x="72" y="433" width="1" height="1"/><rect x="72" y="420" width="1" height="1"/><rect x="73" y="431" width="1" height="1"/><rect x="73" y="432" width="1" height="1"/><rect x="74" y="432" width="1" height="1"/><rect x="74" y="419" width="1" height="1"/><rect x="75" y="432" width="1" height="1"/><rect x="75" y="423" width="1" height="1"/><rect x="76" y="433" width="1" height="1"/><rect x="77" y="431" width="1" height="1"/><rect x="78" y="432" width="1" height="1"/><rect x="78" y="431" width="1" height="1"/><rect x="78" y="420" width="1" height="1"/><rect x="79" y="432" width="1" height="1"/><rect x="79" y="431" width="1" height="1"/><rect x="79" y="419" width="1" height="1"/><rect x="80" y="430" width="1" height="1"/><rect x="80" y="431" width="1" height="1"/><rect x="80" y="419" width="1" height="1"/><rect x="81" y="432" width="1" height="1"/><rect x="81" y="433" width="1" height="1"/><rect x="81" y="419" width="1" height="1"/><rect x="82" y="434" width="1" height="1"/><rect x="82" y="432" width="1" height="1"/><rect x="82" y="419" width="1" height="1"/><rect x="83" y="433" width="1" height="1"/><rect x="83" y="431" width="1" height="1"/><rect x="83" y="420" width="1" height="1"/><rect x="84" y="433" width="1" height="1"/><rect x="84" y="419" width="1" height="1"/><rect x="85" y="432" width="1" height="1"/><rect x="85" y="419" width="1" height="1"/><rect x="86" y="431" width="1" height="1"/><rect x="86" y="417" width="1" height="1"/><rect x="87" y="431" width="1" height="1"/><rect x="87" y="420" width="1" height="1"/><rect x="88" y="431" width="1" height="1"/><rect x="88" y="436" width="1" height="1"/><rect x="89" y="432" width="1" height="1"/><rect x="89" y="422" width="1" height="1"/><rect x="90" y="421" width="1" height="1"/><rect x="91" y="432" width="1" height="1"/><rect x="91" y="419" width="1" height="1"/><rect x="92" y="421" width="1" height="1"/><rect x="92" y="420" width="1" height="1"/><rect x="93" y="433" width="1" height="1"/><rect x="93" y="423" width="1" height="1"/><rect x="94" y="420" width="1" height="1"/><rect x="95" y="421" width="1" height="1"/><rect x="96" y="434" width="1" height="1"/><rect x="96" y="419" width="1" height="1"/><rect x="97" y="431" width="1" height="1"/><rect x="97" y="417" width="1" height="1"/><rect x="98" y="432" width="1" height="1"/><rect x="98" y="419" width="1" height="1"/><rect x="99" y="419" width="1" height="1"/><rect x="100" y="433" width="1" height="1"/><rect x="100" y="422" width="1" height="1"/><rect x="101" y="418" width="1" height="1"/><rect x="102" y="431" width="1" height="1"/><rect x="102" y="417" width="1" height="1"/><rect x="103" y="432" width="1" height="1"/><rect x="103" y="433" width="1" height="1"/><rect x="103" y="420" width="1" height="1"/><rect x="104" y="433" width="1" height="1"/><rect x="104" y="432" width="1" height="1"/><rect x="105" y="432" width="1" height="1"/><rect x="105" y="420" width="1" height="1"/><rect x="106" y="434" width="1" height="1"/><rect x="106" y="419" width="1" height="1"/><rect x="107" y="433" width="1" height="1"/><rect x="108" y="420" width="1" height="1"/><rect x="109" y="430" width="1" height="1"/><rect x="109" y="420" width="1" height="1"/><rect x="110" y="431" width="1" height="1"/><rect x="110" y="421" width="1" height="1"/><rect x="111" y="431" width="1" height="1"/><rect x="111" y="420" width="1" height="1"/><rect x="112" y="430" width="1" height="1"/><rect x="112" y="434" width="1" height="1"/><rect x="113" y="432" width="1" height="1"/><rect x="113" y="434" width="1" height="1"/><rect x="113" y="420" width="1" height="1"/><rect x="114" y="434" width="1" height="1"/><rect x="114" y="421" width="1" height="1"/><rect x="115" y="430" width="1" height="1"/><rect x="115" y="420" width="1" height="1"/><rect x="116" y="431" width="1" height="1"/><rect x="116" y="419" width="1" height="1"/><rect x="117" y="433" width="1" height="1"/><rect x="117" y="420" width="1" height="1"/><rect x="118" y="432" width="1" height="1"/><rect x="118" y="430" width="1" height="1"/><rect x="118" y="417" width="1" height="1"/><rect x="118" y="420" width="1" height="1"/><rect x="119" y="430" width="1" height="1"/><rect x="119" y="420" width="1" height="1"/><rect x="120" y="421" width="1" height="1"/><rect x="121" y="433" width="1" height="1"/><rect x="122" y="434" width="1" height="1"/><rect x="122" y="430" width="1" height="1"/><rect x="122" y="420" width="1" height="1"/><rect x="123" y="431" width="1" height="1"/><rect x="123" y="420" width="1" height="1"/><rect x="124" y="420" width="1" height="1"/><rect x="125" y="431" width="1" height="1"/><rect x="125" y="421" width="1" height="1"/><rect x="126" y="432" width="1" height="1"/><rect x="127" y="433" width="1" height="1"/><rect x="127" y="421" width="1" height="1"/><rect x="128" y="432" width="1" height="1"/><rect x="129" y="433" width="1" height="1"/><rect x="129" y="420" width="1" height="1"/><rect x="130" y="431" width="1" height="1"/><rect x="130" y="421" width="1" height="1"/><rect x="130" y="420" width="1" height="1"/><rect x="131" y="419" width="1" height="1"/><rect x="131" y="422" width="1" height="1"/><rect x="132" y="432" width="1" height="1"/><rect x="132" y="433" width="1" height="1"/><rect x="133" y="431" width="1" height="1"/><rect x="133" y="420" width="1" height="1"/><rect x="134" y="434" width="1" height="1"/><rect x="134" y="419" width="1" height="1"/><rect x="135" y="432" width="1" height="1"/><rect x="136" y="431" width="1" height="1"/><rect x="136" y="421" width="1" height="1"/><rect x="137" y="431" width="1" height="1"/><rect x="138" y="432" width="1" height="1"/><rect x="138" y="420" width="1" height="1"/><rect x="139" y="431" width="1" height="1"/><rect x="139" y="419" width="1" height="1"/><rect x="140" y="433" width="1" height="1"/><rect x="140" y="420" width="1" height="1"/><rect x="141" y="431" width="1" height="1"/><rect x="142" y="430" width="1" height="1"/><rect x="143" y="433" width="1" height="1"/><rect x="144" y="430" width="1" height="1"/><rect x="144" y="420" width="1" height="1"/><rect x="145" y="433" width="1" height="1"/><rect x="145" y="417" width="1" height="1"/><rect x="146" y="433" width="1" height="1"/><rect x="146" y="420" width="1" height="1"/><rect x="147" y="418" width="1" height="1"/><rect x="147" y="421" width="1" height="1"/><rect x="148" y="433" width="1" height="1"/><rect x="148" y="419" width="1" height="1"/><rect x="149" y="433" width="1" height="1"/><rect x="150" y="432" width="1" height="1"/><rect x="150" y="418" width="1" height="1"/><rect x="150" y="421" width="1" height="1"/><rect x="151" y="433" width="1" height="1"/><rect x="151" y="430" width="1" height="1"/><rect x="151" y="419" width="1" height="1"/><rect x="152" y="432" width="1" height="1"/><rect x="152" y="420" width="1" height="1"/><rect x="153" y="432" width="1" height="1"/><rect x="153" y="420" width="1" height="1"/><rect x="154" y="434" width="1" height="1"/><rect x="155" y="430" width="1" height="1"/><rect x="155" y="417" width="1" height="1"/><rect x="156" y="432" width="1" height="1"/><rect x="156" y="418" width="1" height="1"/><rect x="157" y="433" width="1" height="1"/><rect x="157" y="420" width="1" height="1"/><rect x="158" y="432" width="1" height="1"/><rect x="158" y="419" width="1" height="1"/><rect x="159" y="420" width="1" height="1"/><rect x="160" y="433" width="1" height="1"/><rect x="160" y="420" width="1" height="1"/><rect x="161" y="432" width="1" height="1"/><rect x="161" y="419" width="1" height="1"/><rect x="162" y="431" width="1" height="1"/><rect x="163" y="432" width="1" height="1"/><rect x="163" y="419" width="1" height="1"/><rect x="164" y="433" width="1" height="1"/><rect x="164" y="421" width="1" height="1"/><rect x="165" y="433" width="1" height="1"/><rect x="165" y="420" width="1" height="1"/><rect x="166" y="430" width="1" height="1"/><rect x="166" y="421" width="1" height="1"/><rect x="166" y="415" width="1" height="1"/><rect x="167" y="432" width="1" height="1"/><rect x="168" y="419" width="1" height="1"/><rect x="169" y="433" width="1" height="1"/><rect x="169" y="419" width="1" height="1"/><rect x="171" y="432" width="1" height="1"/><rect x="171" y="420" width="1" height="1"/><rect x="172" y="433" width="1" height="1"/><rect x="172" y="419" width="1" height="1"/><rect x="173" y="419" width="1" height="1"/><rect x="174" y="433" width="1" height="1"/><rect x="175" y="432" width="1" height="1"/><rect x="175" y="420" width="1" height="1"/><rect x="176" y="433" width="1" height="1"/><rect x="176" y="419" width="1" height="1"/><rect x="177" y="434" width="1" height="1"/><rect x="177" y="418" width="1" height="1"/><rect x="177" y="419" width="1" height="1"/><rect x="178" y="432" width="1" height="1"/><rect x="178" y="420" width="1" height="1"/><rect x="179" y="433" width="1" height="1"/><rect x="179" y="431" width="1" height="1"/><rect x="179" y="420" width="1" height="1"/><rect x="179" y="418" width="1" height="1"/><rect x="180" y="433" width="1" height="1"/><rect x="180" y="421" width="1" height="1"/><rect x="180" y="417" width="1" height="1"/><rect x="181" y="431" width="1" height="1"/><rect x="181" y="432" width="1" height="1"/><rect x="181" y="420" width="1" height="1"/><rect x="182" y="434" width="1" height="1"/><rect x="182" y="419" width="1" height="1"/><rect x="183" y="432" width="1" height="1"/><rect x="183" y="420" width="1" height="1"/><rect x="184" y="432" width="1" height="1"/><rect x="184" y="419" width="1" height="1"/><rect x="185" y="433" width="1" height="1"/><rect x="185" y="420" width="1" height="1"/><rect x="186" y="420" width="1" height="1"/><rect x="187" y="430" width="1" height="1"/><rect x="188" y="432" width="1" height="1"/><rect x="188" y="420" width="1" height="1"/><rect x="189" y="433" width="1" height="1"/><rect x="189" y="420" width="1" height="1"/><rect x="190" y="419" width="1" height="1"/><rect x="191" y="432" width="1" height="1"/><rect x="192" y="421" width="1" height="1"/><rect x="193" y="432" width="1" height="1"/><rect x="193" y="419" width="1" height="1"/><rect x="194" y="431" width="1" height="1"/><rect x="194" y="419" width="1" height="1"/><rect x="195" y="432" width="1" height="1"/><rect x="195" y="433" width="1" height="1"/><rect x="195" y="419" width="1" height="1"/><rect x="196" y="421" width="1" height="1"/><rect x="197" y="431" width="1" height="1"/><rect x="197" y="418" width="1" height="1"/><rect x="198" y="433" width="1" height="1"/><rect x="198" y="419" width="1" height="1"/><rect x="199" y="433" width="1" height="1"/><rect x="199" y="434" width="1" height="1"/><rect x="199" y="420" width="1" height="1"/><rect x="201" y="431" width="1" height="1"/><rect x="201" y="420" width="1" height="1"/><rect x="202" y="434" width="1" height="1"/><rect x="202" y="423" width="1" height="1"/><rect x="203" y="433" width="1" height="1"/><rect x="203" y="419" width="1" height="1"/><rect x="203" y="417" width="1" height="1"/><rect x="204" y="431" width="1" height="1"/><rect x="204" y="433" width="1" height="1"/><rect x="205" y="431" width="1" height="1"/><rect x="205" y="420" width="1" height="1"/><rect x="206" y="431" width="1" height="1"/><rect x="207" y="433" width="1" height="1"/><rect x="207" y="419" width="1" height="1"/><rect x="208" y="432" width="1" height="1"/><rect x="208" y="421" width="1" height="1"/><rect x="209" y="432" width="1" height="1"/><rect x="209" y="419" width="1" height="1"/><rect x="210" y="419" width="1" height="1"/><rect x="211" y="430" width="1" height="1"/><rect x="212" y="432" width="1" height="1"/><rect x="212" y="420" width="1" height="1"/><rect x="213" y="433" width="1" height="1"/><rect x="213" y="419" width="1" height="1"/><rect x="215" y="432" width="1" height="1"/><rect x="215" y="421" width="1" height="1"/><rect x="216" y="431" width="1" height="1"/><rect x="216" y="432" width="1" height="1"/><rect x="216" y="419" width="1" height="1"/><rect x="217" y="432" width="1" height="1"/><rect x="217" y="420" width="1" height="1"/><rect x="218" y="433" width="1" height="1"/><rect x="218" y="418" width="1" height="1"/><rect x="218" y="422" width="1" height="1"/><rect x="219" y="433" width="1" height="1"/><rect x="219" y="422" width="1" height="1"/><rect x="220" y="430" width="1" height="1"/><rect x="220" y="419" width="1" height="1"/><rect x="221" y="432" width="1" height="1"/><rect x="221" y="433" width="1" height="1"/><rect x="221" y="420" width="1" height="1"/><rect x="222" y="431" width="1" height="1"/><rect x="222" y="419" width="1" height="1"/><rect x="223" y="431" width="1" height="1"/><rect x="223" y="419" width="1" height="1"/><rect x="223" y="415" width="1" height="1"/><rect x="224" y="430" width="1" height="1"/><rect x="224" y="419" width="1" height="1"/><rect x="225" y="433" width="1" height="1"/><rect x="225" y="420" width="1" height="1"/><rect x="226" y="432" width="1" height="1"/><rect x="227" y="433" width="1" height="1"/><rect x="227" y="420" width="1" height="1"/><rect x="229" y="431" width="1" height="1"/><rect x="230" y="432" width="1" height="1"/><rect x="230" y="419" width="1" height="1"/><rect x="232" y="433" width="1" height="1"/><rect x="232" y="420" width="1" height="1"/><rect x="233" y="432" width="1" height="1"/><rect x="234" y="431" width="1" height="1"/><rect x="234" y="432" width="1" height="1"/><rect x="234" y="419" width="1" height="1"/><rect x="235" y="432" width="1" height="1"/><rect x="235" y="433" width="1" height="1"/><rect x="235" y="421" width="1" height="1"/><rect x="235" y="424" width="1" height="1"/><rect x="236" y="433" width="1" height="1"/><rect x="237" y="433" width="1" height="1"/><rect x="237" y="419" width="1" height="1"/><rect x="238" y="434" width="1" height="1"/><rect x="238" y="421" width="1" height="1"/><rect x="239" y="431" width="1" height="1"/><rect x="240" y="432" width="1" height="1"/><rect x="240" y="421" width="1" height="1"/><rect x="241" y="433" width="1" height="1"/><rect x="241" y="419" width="1" height="1"/><rect x="242" y="432" width="1" height="1"/><rect x="242" y="419" width="1" height="1"/><rect x="243" y="431" width="1" height="1"/><rect x="243" y="419" width="1" height="1"/><rect x="244" y="431" width="1" height="1"/><rect x="244" y="420" width="1" height="1"/><rect x="245" y="431" width="1" height="1"/><rect x="245" y="418" width="1" height="1"/><rect x="246" y="431" width="1" height="1"/><rect x="247" y="432" width="1" height="1"/><rect x="248" y="419" width="1" height="1"/><rect x="249" y="420" width="1" height="1"/><rect x="250" y="432" width="1" height="1"/><rect x="250" y="421" width="1" height="1"/><rect x="251" y="418" width="1" height="1"/><rect x="252" y="431" width="1" height="1"/><rect x="252" y="420" width="1" height="1"/><rect x="253" y="431" width="1" height="1"/><rect x="254" y="431" width="1" height="1"/><rect x="254" y="421" width="1" height="1"/><rect x="255" y="419" width="1" height="1"/><rect x="256" y="417" width="1" height="1"/><rect x="257" y="435" width="1" height="1"/><rect x="257" y="419" width="1" height="1"/><rect x="258" y="433" width="1" height="1"/><rect x="258" y="420" width="1" height="1"/><rect x="260" y="432" width="1" height="1"/><rect x="261" y="431" width="1" height="1"/><rect x="261" y="420" width="1" height="1"/><rect x="262" y="421" width="1" height="1"/><rect x="264" y="432" width="1" height="1"/><rect x="264" y="420" width="1" height="1"/><rect x="265" y="419" width="1" height="1"/><rect x="266" y="420" width="1" height="1"/><rect x="267" y="431" width="1" height="1"/><rect x="267" y="418" width="1" height="1"/><rect x="267" y="422" width="1" height="1"/><rect x="268" y="431" width="1" height="1"/><rect x="268" y="419" width="1" height="1"/><rect x="269" y="430" width="1" height="1"/><rect x="269" y="420" width="1" height="1"/><rect x="269" y="422" width="1" height="1"/><rect x="270" y="420" width="1" height="1"/><rect x="271" y="431" width="1" height="1"/><rect x="272" y="420" width="1" height="1"/><rect x="274" y="432" width="1" height="1"/><rect x="275" y="420" width="1" height="1"/><rect x="276" y="432" width="1" height="1"/><rect x="277" y="432" width="1" height="1"/><rect x="278" y="433" width="1" height="1"/><rect x="280" y="420" width="1" height="1"/><rect x="281" y="419" width="1" height="1"/><rect x="282" y="433" width="1" height="1"/><rect x="282" y="419" width="1" height="1"/><rect x="282" y="422" width="1" height="1"/><rect x="283" y="431" width="1" height="1"/><rect x="283" y="421" width="1" height="1"/><rect x="284" y="419" width="1" height="1"/><rect x="285" y="421" width="1" height="1"/><rect x="286" y="431" width="1" height="1"/><rect x="287" y="433" width="1" height="1"/><rect x="287" y="419" width="1" height="1"/><rect x="288" y="432" width="1" height="1"/><rect x="288" y="433" width="1" height="1"/><rect x="288" y="419" width="1" height="1"/><rect x="289" y="432" width="1" height="1"/><rect x="289" y="419" width="1" height="1"/><rect x="290" y="419" width="1" height="1"/><rect x="291" y="431" width="1" height="1"/><rect x="291" y="419" width="1" height="1"/><rect x="292" y="421" width="1" height="1"/><rect x="293" y="435" width="1" height="1"/><rect x="294" y="432" width="1" height="1"/><rect x="295" y="432" width="1" height="1"/><rect x="295" y="419" width="1" height="1"/><rect x="296" y="421" width="1" height="1"/><rect x="297" y="432" width="1" height="1"/><rect x="297" y="420" width="1" height="1"/><rect x="298" y="419" width="1" height="1"/><rect x="299" y="420" width="1" height="1"/><rect x="300" y="419" width="1" height="1"/><rect x="301" y="433" width="1" height="1"/><rect x="301" y="417" width="1" height="1"/><rect x="302" y="431" width="1" height="1"/><rect x="303" y="432" width="1" height="1"/><rect x="303" y="419" width="1" height="1"/><rect x="304" y="419" width="1" height="1"/><rect x="305" y="433" width="1" height="1"/><rect x="305" y="419" width="1" height="1"/><rect x="306" y="421" width="1" height="1"/><rect x="307" y="420" width="1" height="1"/><rect x="309" y="432" width="1" height="1"/><rect x="309" y="419" width="1" height="1"/><rect x="310" y="418" width="1" height="1"/><rect x="311" y="432" width="1" height="1"/><rect x="311" y="430" width="1" height="1"/><rect x="312" y="430" width="1" height="1"/><rect x="312" y="419" width="1" height="1"/><rect x="314" y="432" width="1" height="1"/><rect x="314" y="419" width="1" height="1"/><rect x="315" y="419" width="1" height="1"/><rect x="315" y="424" width="1" height="1"/><rect x="316" y="420" width="1" height="1"/><rect x="318" y="433" width="1" height="1"/><rect x="318" y="419" width="1" height="1"/><rect x="319" y="432" width="1" height="1"/><rect x="319" y="420" width="1" height="1"/><rect x="320" y="432" width="1" height="1"/><rect x="320" y="421" width="1" height="1"/><rect x="321" y="421" width="1" height="1"/><rect x="321" y="417" width="1" height="1"/><rect x="322" y="432" width="1" height="1"/><rect x="322" y="419" width="1" height="1"/><rect x="323" y="432" width="1" height="1"/><rect x="324" y="431" width="1" height="1"/><rect x="325" y="422" width="1" height="1"/><rect x="326" y="418" width="1" height="1"/><rect x="327" y="431" width="1" height="1"/><rect x="327" y="419" width="1" height="1"/><rect x="328" y="420" width="1" height="1"/><rect x="329" y="420" width="1" height="1"/><rect x="330" y="420" width="1" height="1"/><rect x="331" y="432" width="1" height="1"/><rect x="331" y="419" width="1" height="1"/><rect x="332" y="432" width="1" height="1"/><rect x="332" y="419" width="1" height="1"/><rect x="334" y="419" width="1" height="1"/><rect x="335" y="432" width="1" height="1"/><rect x="335" y="420" width="1" height="1"/><rect x="337" y="433" width="1" height="1"/><rect x="337" y="419" width="1" height="1"/><rect x="338" y="432" width="1" height="1"/><rect x="338" y="420" width="1" height="1"/><rect x="341" y="432" width="1" height="1"/><rect x="341" y="421" width="1" height="1"/><rect x="342" y="433" width="1" height="1"/><rect x="342" y="420" width="1" height="1"/><rect x="343" y="421" width="1" height="1"/><rect x="344" y="433" width="1" height="1"/><rect x="345" y="419" width="1" height="1"/><rect x="345" y="421" width="1" height="1"/><rect x="346" y="421" width="1" height="1"/><rect x="347" y="431" width="1" height="1"/><rect x="347" y="420" width="1" height="1"/><rect x="348" y="421" width="1" height="1"/><rect x="349" y="431" width="1" height="1"/><rect x="349" y="419" width="1" height="1"/><rect x="350" y="421" width="1" height="1"/><rect x="350" y="425" width="1" height="1"/><rect x="351" y="433" width="1" height="1"/><rect x="351" y="419" width="1" height="1"/><rect x="352" y="433" width="1" height="1"/><rect x="353" y="432" width="1" height="1"/><rect x="353" y="433" width="1" height="1"/><rect x="353" y="419" width="1" height="1"/><rect x="354" y="433" width="1" height="1"/><rect x="354" y="420" width="1" height="1"/><rect x="355" y="420" width="1" height="1"/><rect x="356" y="432" width="1" height="1"/><rect x="356" y="418" width="1" height="1"/><rect x="357" y="431" width="1" height="1"/><rect x="358" y="432" width="1" height="1"/><rect x="358" y="419" width="1" height="1"/><rect x="359" y="420" width="1" height="1"/><rect x="360" y="431" width="1" height="1"/><rect x="361" y="432" width="1" height="1"/><rect x="361" y="420" width="1" height="1"/><rect x="362" y="418" width="1" height="1"/><rect x="363" y="421" width="1" height="1"/><rect x="364" y="420" width="1" height="1"/><rect x="365" y="431" width="1" height="1"/><rect x="365" y="418" width="1" height="1"/><rect x="366" y="432" width="1" height="1"/><rect x="366" y="418" width="1" height="1"/><rect x="368" y="419" width="1" height="1"/><rect x="370" y="420" width="1" height="1"/><rect x="371" y="432" width="1" height="1"/><rect x="371" y="419" width="1" height="1"/><rect x="372" y="432" width="1" height="1"/><rect x="372" y="423" width="1" height="1"/><rect x="373" y="431" width="1" height="1"/><rect x="373" y="419" width="1" height="1"/><rect x="374" y="432" width="1" height="1"/><rect x="374" y="420" width="1" height="1"/><rect x="375" y="421" width="1" height="1"/><rect x="376" y="419" width="1" height="1"/><rect x="377" y="430" width="1" height="1"/><rect x="377" y="419" width="1" height="1"/><rect x="378" y="431" width="1" height="1"/><rect x="378" y="419" width="1" height="1"/><rect x="379" y="420" width="1" height="1"/><rect x="380" y="431" width="1" height="1"/><rect x="380" y="420" width="1" height="1"/><rect x="381" y="433" width="1" height="1"/><rect x="381" y="430" width="1" height="1"/><rect x="381" y="420" width="1" height="1"/><rect x="382" y="420" width="1" height="1"/><rect x="383" y="422" width="1" height="1"/><rect x="383" y="419" width="1" height="1"/><rect x="385" y="420" width="1" height="1"/><rect x="386" y="432" width="1" height="1"/><rect x="386" y="420" width="1" height="1"/><rect x="386" y="424" width="1" height="1"/><rect x="387" y="419" width="1" height="1"/><rect x="390" y="431" width="1" height="1"/><rect x="390" y="420" width="1" height="1"/><rect x="391" y="432" width="1" height="1"/><rect x="391" y="419" width="1" height="1"/><rect x="392" y="432" width="1" height="1"/><rect x="392" y="421" width="1" height="1"/><rect x="393" y="433" width="1" height="1"/><rect x="393" y="420" width="1" height="1"/><rect x="394" y="432" width="1" height="1"/><rect x="394" y="420" width="1" height="1"/><rect x="398" y="432" width="1" height="1"/><rect x="398" y="419" width="1" height="1"/><rect x="399" y="419" width="1" height="1"/><rect x="400" y="431" width="1" height="1"/><rect x="401" y="430" width="1" height="1"/><rect x="403" y="433" width="1" height="1"/><rect x="404" y="420" width="1" height="1"/><rect x="405" y="430" width="1" height="1"/><rect x="406" y="432" width="1" height="1"/><rect x="407" y="433" width="1" height="1"/><rect x="408" y="432" width="1" height="1"/><rect x="408" y="421" width="1" height="1"/><rect x="409" y="431" width="1" height="1"/><rect x="410" y="431" width="1" height="1"/><rect x="411" y="432" width="1" height="1"/><rect x="412" y="420" width="1" height="1"/><rect x="413" y="432" width="1" height="1"/><rect x="414" y="430" width="1" height="1"/><rect x="415" y="432" width="1" height="1"/><rect x="418" y="433" width="1" height="1"/><rect x="418" y="419" width="1" height="1"/><rect x="419" y="431" width="1" height="1"/><rect x="419" y="419" width="1" height="1"/><rect x="420" y="419" width="1" height="1"/><rect x="420" y="421" width="1" height="1"/><rect x="422" y="433" width="1" height="1"/><rect x="423" y="421" width="1" height="1"/><rect x="425" y="421" width="1" height="1"/><rect x="426" y="430" width="1" height="1"/><rect x="427" y="431" width="1" height="1"/><rect x="427" y="420" width="1" height="1"/><rect x="428" y="433" width="1" height="1"/><rect x="428" y="420" width="1" height="1"/><rect x="429" y="432" width="1" height="1"/><rect x="429" y="433" width="1" height="1"/><rect x="430" y="419" width="1" height="1"/><rect x="432" y="432" width="1" height="1"/><rect x="432" y="419" width="1" height="1"/><rect x="433" y="433" width="1" height="1"/><rect x="436" y="419" width="1" height="1"/><rect x="436" y="420" width="1" height="1"/><rect x="437" y="431" width="1" height="1"/><rect x="443" y="420" width="1" height="1"/><rect x="445" y="419" width="1" height="1"/><rect x="460" y="432" width="1" height="1"/><rect x="467" y="431" width="1" height="1"/><rect x="473" y="432" width="1" height="1"/><rect x="475" y="432" width="1" height="1"/><rect x="476" y="433" width="1" height="1"/><rect x="477" y="432" width="1" height="1"/><rect x="477" y="420" width="1" height="1"/><rect x="49" y="437" width="1" height="1"/><rect x="63" y="424" width="1" height="1"/><rect x="74" y="427" width="1" height="1"/><rect x="87" y="415" width="1" height="1"/><rect x="121" y="415" width="1" height="1"/><rect x="110" y="412" width="1" height="1"/><rect x="128" y="414" width="1" height="1"/><rect x="235" y="410" width="1" height="1"/><rect x="180" y="426" width="1" height="1"/><rect x="300" y="425" width="1" height="1"/></g></svg>
<span class="ax" style="left:48.4px;top:153.69px">MB/s</span><span class="ax" style="right:174.0px;top:153.69px">ms</span><span class="ax" style="right:647.4px;top:160.69px">55</span><span class="ax" style="left:521.4px;top:160.69px">5.50</span><span class="ax" style="right:647.4px;top:185.69px">50</span><span class="ax" style="left:521.4px;top:185.69px">5.00</span><span class="ax" style="right:647.4px;top:211.69px">45</span><span class="ax" style="left:521.4px;top:211.69px">4.50</span><span class="ax" style="right:647.4px;top:237.69px">40</span><span class="ax" style="left:521.4px;top:237.69px">4.00</span><span class="ax" style="right:647.4px;top:262.69px">35</span><span class="ax" style="left:521.4px;top:262.69px">3.50</span><span class="ax" style="right:647.4px;top:288.69px">30</span><span class="ax" style="left:521.4px;top:288.69px">3.00</span><span class="ax" style="right:647.4px;top:314.69px">25</span><span class="ax" style="left:521.4px;top:314.69px">2.50</span><span class="ax" style="right:647.4px;top:340.69px">20</span><span class="ax" style="left:521.4px;top:340.69px">2.00</span><span class="ax" style="right:647.4px;top:365.69px">15</span><span class="ax" style="left:521.4px;top:365.69px">1.50</span><span class="ax" style="right:647.4px;top:391.69px">10</span><span class="ax" style="left:521.4px;top:391.69px">1.00</span><span class="ax" style="right:647.4px;top:417.69px">5</span><span class="ax" style="left:521.4px;top:417.69px">0.50</span>
<span class="ax" style="left:17.5px;width:60px;text-align:center;top:454.69px">0</span><span class="ax" style="left:64.4px;width:60px;text-align:center;top:454.69px">1</span><span class="ax" style="left:111.3px;width:60px;text-align:center;top:454.69px">3</span><span class="ax" style="left:158.2px;width:60px;text-align:center;top:454.69px">4</span><span class="ax" style="left:205.1px;width:60px;text-align:center;top:454.69px">6</span><span class="ax" style="left:252.0px;width:60px;text-align:center;top:454.69px">8</span><span class="ax" style="left:298.9px;width:60px;text-align:center;top:454.69px">9</span><span class="ax" style="left:345.8px;width:60px;text-align:center;top:454.69px">11</span><span class="ax" style="left:392.7px;width:60px;text-align:center;top:454.69px">12</span><span class="ax" style="left:439.6px;width:60px;text-align:center;top:454.69px">14</span><span class="ax" style="left:485.5px;width:60px;text-align:center;top:454.69px">16gB</span>
<div class="btn" style="left:555px;top:147px;width:86px;height:19px"></div>
<span class="t" style="left:584.02px;top:150px;font-size:12.5px;line-height:12.5px;transform:scaleX(0.9643);">Start</span>
<div class="sep" style="top:176px"></div><div class="sep" style="top:212px"></div><div class="sep" style="top:279px"></div><div class="sep" style="top:374px"></div>
<div style="left:551px;top:183px;width:12px;height:12px;border-radius:6px;border:1px solid #8e8f8f;background:#f0f0f0;box-shadow:inset 0 0 0 1px #d8dce4"></div>
<div style="left:553px;top:185px;width:8px;height:8px;border-radius:4px;border:1px solid #2a5474;background:radial-gradient(circle at 40% 35%,#a8e4fa 0,#1c98e0 50%,#0a5a96 100%)"></div>
<div style="left:551px;top:198px;width:12px;height:12px;border-radius:6px;border:1px solid #8e8f8f;background:radial-gradient(circle at 40% 35%,#fafafa 0,#e4e4e4 60%,#c8ccd0 100%)"></div>
<span class="t" style="left:566.63px;top:183px;font-size:12.5px;line-height:12.5px;transform:scaleX(0.8694);">Read</span>
<span class="t" style="left:567.00px;top:198px;font-size:12.5px;line-height:12.5px;transform:scaleX(0.8777);">Write</span>
<div class="cb" style="left:551px;top:219px"><div class="cbi"></div></div><div class="cb" style="left:551px;top:264px"><div class="cbi"></div><svg style="left:1px;top:0px" width="9" height="10" viewBox="0 0 9 10"><path d="M1,5 L3.4,8.4 L7.8,0.8" fill="none" stroke="#3a4cb4" stroke-width="1.7"/></svg></div><div class="cb" style="left:551px;top:380px"><div class="cbi"></div><svg style="left:1px;top:0px" width="9" height="10" viewBox="0 0 9 10"><path d="M1,5 L3.4,8.4 L7.8,0.8" fill="none" stroke="#3a4cb4" stroke-width="1.7"/></svg></div><div class="cb" style="left:551px;top:411px"><div class="cbi"></div><svg style="left:1px;top:0px" width="9" height="10" viewBox="0 0 9 10"><path d="M1,5 L3.4,8.4 L7.8,0.8" fill="none" stroke="#3a4cb4" stroke-width="1.7"/></svg></div>
<span class="t" style="left:566.13px;top:220px;font-size:12.5px;line-height:12.5px;transform:scaleX(0.9347);">Short stroke</span>
<span class="t" style="left:566.77px;top:265px;font-size:12.5px;line-height:12.5px;transform:scaleX(0.9377);">Transfer rate</span>
<span class="t" style="left:567.70px;top:381px;font-size:12.5px;line-height:12.5px;transform:scaleX(0.9354);">Access time</span>
<span class="t" style="left:566.75px;top:412px;font-size:12.5px;line-height:12.5px;transform:scaleX(0.9538);">Burst rate</span>
<div style="left:551px;top:238px;width:72px;height:18px;border:1px solid #b0b4bc;border-radius:1px;background:#fbfbfb"></div>
<div style="left:606px;top:240px;width:15px;height:7px;border:1px solid #c4c4c4;background:linear-gradient(#f6f6f6,#e4e4e4)"></div>
<div style="left:606px;top:247px;width:15px;height:7px;border:1px solid #c4c4c4;background:linear-gradient(#f0f0f0,#dcdcdc)"></div>
<svg style="left:611px;top:242px" width="5" height="3" viewBox="0 0 5 3"><polygon points="0,3 2.5,0 5,3" fill="#a0a0a0"/></svg>
<svg style="left:611px;top:249px" width="5" height="3" viewBox="0 0 5 3"><polygon points="0,0 2.5,3 5,0" fill="#a0a0a0"/></svg>
<span class="t" style="left:555.09px;top:241px;font-size:12.5px;line-height:12.5px;color:#808080;transform:scaleX(0.8332);">40</span>
<span class="t" style="left:636.02px;top:241px;font-size:12.5px;line-height:12.5px;transform:scaleX(0.9506);">gB</span>
<span class="t" style="left:550.71px;top:281px;font-size:12.5px;line-height:12.5px;transform:scaleX(0.8915);">Minimum</span>
<span class="t" style="left:550.72px;top:311px;font-size:12.5px;line-height:12.5px;transform:scaleX(0.8820);">Maximum</span>
<span class="t" style="left:552.00px;top:340px;font-size:12.5px;line-height:12.5px;transform:scaleX(0.8718);">Average</span>
<span class="t" style="left:550.75px;top:442px;font-size:12.5px;line-height:12.5px;transform:scaleX(0.8863);">CPU usage</span>
<div class="vb" style="top:296px"></div><span class="t" style="left:574.57px;top:296px;font-size:12.5px;line-height:12.5px;color:#10a8f8;font-weight:bold;transform:scaleX(1.0562);">49.5 MB/s</span>
<div class="vb" style="top:326px"></div><span class="t" style="left:574.30px;top:326px;font-size:12.5px;line-height:12.5px;color:#10a8f8;font-weight:bold;transform:scaleX(1.0609);">51.4 MB/s</span>
<div class="vb" style="top:354px"></div><span class="t" style="left:574.30px;top:354px;font-size:12.5px;line-height:12.5px;color:#10a8f8;font-weight:bold;transform:scaleX(1.0609);">50.4 MB/s</span>
<div class="vb" style="top:395px"></div><span class="t" style="left:579.63px;top:395px;font-size:12.5px;line-height:12.5px;color:#ffff00;font-weight:bold;transform:scaleX(0.9847);">0.442 ms</span>
<div class="vb" style="top:426px"></div><span class="t" style="left:574.70px;top:426px;font-size:12.5px;line-height:12.5px;color:#fff;font-weight:bold;transform:scaleX(1.0574);">26.0 MB/s</span>
<div class="vb" style="top:456px"></div><span class="t" style="left:593.88px;top:456px;font-size:12.5px;line-height:12.5px;color:#fff;font-weight:bold;transform:scaleX(0.8538);">5.2%</span>
</body></html>
